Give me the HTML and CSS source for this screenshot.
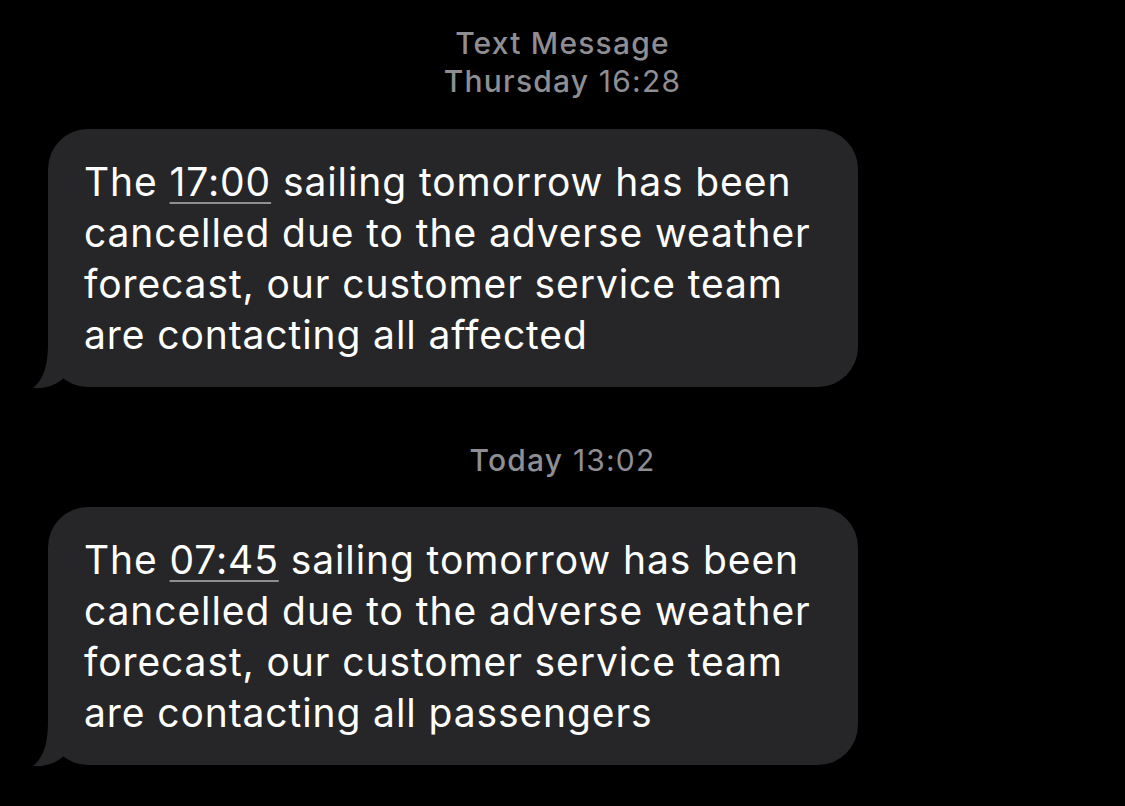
FILE: index.html
```html
<!DOCTYPE html>
<html>
<head>
<meta charset="utf-8">
<link rel="stylesheet" href="styles.css">
</head>
<body>
<div class="thread">
  <div class="stamp first">
    <div class="stamp-line"><b>Text Message</b></div>
    <div class="stamp-line"><b>Thursday</b> 16:28</div>
  </div>
  <div class="bubble">
    <p>The <span class="link">17:00</span> sailing tomorrow has been cancelled due to the adverse weather forecast, our customer service team are contacting all affected</p>
    <svg class="tail" width="50" height="46" viewBox="0 0 50 46"><path d="M16 0 C16 22 12 36 1 45 C13 46 25 42 33 34 L50 34 L50 0 Z" fill="#262628"/></svg>
  </div>
  <div class="stamp second">
    <div class="stamp-line"><b>Today</b> 13:02</div>
  </div>
  <div class="bubble">
    <p>The <span class="link">07:45</span> sailing tomorrow has been cancelled due to the adverse weather forecast, our customer service team are contacting all passengers</p>
    <svg class="tail" width="50" height="46" viewBox="0 0 50 46"><path d="M16 0 C16 22 12 36 1 45 C13 46 25 42 33 34 L50 34 L50 0 Z" fill="#262628"/></svg>
  </div>
</div>
</body>
</html>
```
FILE: styles.css
```css
html, body {
  margin: 0;
  padding: 0;
  background: #000;
  height: 100%;
  overflow: hidden;
}
.thread {
  display: flex;
  flex-direction: column;
  font-family: Inter, "Noto Sans", sans-serif;
  padding-top: 24px;
}
.stamp {
  text-align: center;
  color: #8e8e93;
  font-size: 30px;
  line-height: 38px;
  letter-spacing: 1.2px;
  padding-left: 0;
}
.stamp b { font-weight: 500; }
.stamp.first { margin-bottom: 29px; }
.stamp.second { margin: 54px 0 28px; }
.bubble {
  position: relative;
  margin-left: 48px;
  width: 810px;
  box-sizing: border-box;
  background: #262628;
  border-radius: 40px;
  padding: 27px 36px 27px 36px;
}
.bubble p {
  margin: 0;
  color: #fff;
  font-size: 39px;
  line-height: 51px;
  letter-spacing: 0.9px;
}
.link {
  text-decoration: underline;
  text-decoration-color: #8e8e93;
  text-decoration-thickness: 2px;
  text-underline-offset: 6px;
}
.tail {
  position: absolute;
  left: -16px;
  bottom: -2px;
  display: block;
}
```
